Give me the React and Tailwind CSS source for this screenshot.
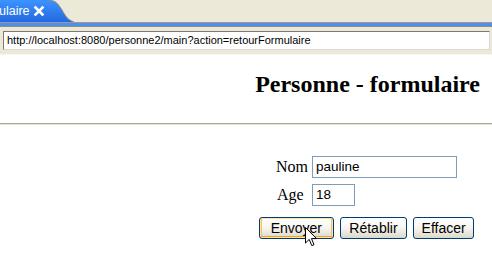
import React from "react";

function Cursor() {
  return (
    <svg
      className="absolute left-[305px] top-[227px]"
      width="13"
      height="20"
      viewBox="0 0 13 20"
    >
      <path
        d="M0.5 0.5 L0.5 16 L4.2 12.4 L6.8 18.6 L9 17.7 L6.5 11.6 L11.5 11.6 Z"
        fill="#ffffff"
        stroke="#000000"
        strokeWidth="1"
        strokeLinejoin="miter"
      />
    </svg>
  );
}

export default function App() {
  const btn =
    "h-[22px] rounded-[3px] border border-[#003c74] bg-gradient-to-b from-[#ffffff] via-[#f6f5f0] to-[#dcd7ca] text-[14px] text-black leading-none [font-family:'Liberation_Sans',Arial,sans-serif]";
  return (
    <div className="relative w-[492px] h-[255px] overflow-hidden bg-white [font-family:'Liberation_Sans',Arial,sans-serif]">
      {/* tab bar */}
      <div className="relative h-[22px] bg-[#ece9d8]">
        <svg className="absolute left-0 top-0" width="80" height="22" viewBox="0 0 80 22">
          <defs>
            <linearGradient id="tabg" x1="0" y1="0" x2="0" y2="1">
              <stop offset="0" stopColor="#3d93ff" />
              <stop offset="1" stopColor="#2369e0" />
            </linearGradient>
          </defs>
          <path
            d="M0 0 L49 0 C56 0 58 4 62 10 C66 17 68 20 74 22 L0 22 Z"
            fill="url(#tabg)"
          />
          <path
            d="M49 0.5 C56 0.5 58 4 62 10 C66 17 68 20 74 22"
            fill="none"
            stroke="#8a8a80"
            strokeWidth="1"
          />
          <path
            d="M35.5 7.5 L42.5 14.5 M42.5 7.5 L35.5 14.5"
            stroke="#ffffff"
            strokeWidth="2.6"
            strokeLinecap="square"
          />
        </svg>
        <div className="absolute left-[-1px] top-[4px] text-white text-[12.5px] leading-[14px]">
          ulaire
        </div>
      </div>
      <div className="h-[1px] bg-[#9a9a90]" />
      <div className="h-[3px] bg-[#4b8ff0]" />
      <div className="h-[1px] bg-[#8c8c84]" />
      {/* address bar */}
      <div className="h-[27px] bg-[#ece9d8] pt-[4px] pl-[3px] pr-[2px]">
        <div className="h-[19px] border border-t-[#7a7a72] border-l-[#7a7a72] border-r-[#dcdad0] border-b-[#dcdad0] bg-white flex items-center pl-[3px] text-[11px] text-black leading-none">
          http://localhost:8080/personne2/main?action=retourFormulaire
        </div>
      </div>
      <div className="h-[1px] bg-[#f7f6f0]" />
      {/* page */}
      <div className="bg-white">
        <h1 className="mt-[15px] pr-[12px] text-right text-[24px] leading-[28px] font-bold text-black [font-family:'Liberation_Serif','Times_New_Roman',serif]">
          Personne - formulaire
        </h1>
        <div className="mt-[25px] h-[1px] bg-[#a9a58f]" />
        <div className="h-[1px] bg-[#e6e3d4]" />
        <div className="flex justify-end pr-[18px] pt-[31px]">
          <div className="w-[215px] flex flex-col">
            <div className="flex items-center pl-[17px] h-[22px]">
              <span className="w-[36px] text-[16px] text-black [font-family:'Liberation_Serif','Times_New_Roman',serif]">Nom</span>
              <div className="w-[145px] h-[22px] border border-[#7f9db9] bg-white flex items-center pl-[3px] text-[13.5px] text-black">
                pauline
              </div>
            </div>
            <div className="flex items-center pl-[18px] h-[22px] mt-[6px]">
              <span className="w-[35px] text-[16px] text-black [font-family:'Liberation_Serif','Times_New_Roman',serif]">Age</span>
              <div className="w-[43px] h-[22px] border border-[#7f9db9] bg-white flex items-center pl-[3px] text-[13.5px] text-black">
                18
              </div>
            </div>
            <div className="flex items-center mt-[11px] gap-[6px]">
              <button className={btn + " w-[75px] shadow-[inset_0_0_0_1px_#fde3a7,inset_0_-2px_0_#f0a030,inset_2px_0_0_#f7c460,inset_-2px_0_0_#f7c460]"}>
                Envoyer
              </button>
              <button className={btn + " w-[68px]"}>Rétablir</button>
              <button className={btn + " w-[61px]"}>Effacer</button>
            </div>
          </div>
        </div>
      </div>
      <Cursor />
    </div>
  );
}
